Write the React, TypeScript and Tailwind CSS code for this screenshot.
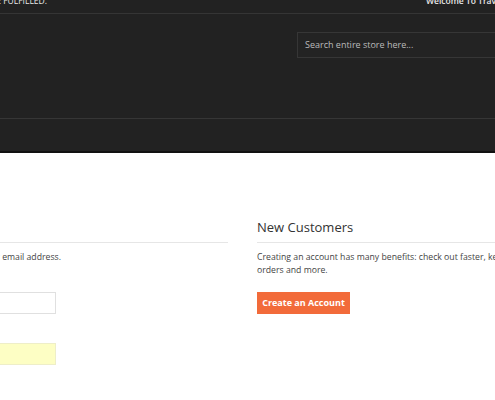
export default function App() {
  return (
    <div className="h-[400px] w-[495px] overflow-hidden bg-white font-['Open_Sans',sans-serif]">
      {/* Dark header */}
      <header className="border-b-2 border-[#111] bg-[#222]">
        <div className="flex h-[14px] items-start border-b border-[#353535]">
          <div className="flex w-[47px] shrink-0 justify-end">
            <span className="mt-[-4px] whitespace-nowrap text-[8.5px] uppercase leading-[10px] text-[#e8e8e8]">
              All orders will be fulfilled.
            </span>
          </div>
          <span className="ml-[379px] mt-[-4px] whitespace-nowrap text-[8.5px] font-semibold leading-[10px] text-[#e8e8e8]">
            Welcome To Traveller
          </span>
        </div>
        <div className="flex h-[104px] justify-end pt-[18px]">
          <div className="mr-[-40px] flex h-[26px] w-[238px] shrink-0 items-center border border-[#363636] bg-[#232323] pl-[7px] text-[9px] text-[#bbb]">
            Search entire store here...
          </div>
        </div>
        <div className="h-[33px] border-t border-[#363636]" />
      </header>

      {/* Login columns */}
      <main className="ml-[-158px] flex gap-[29px] pt-[66px]">
        <section className="w-[386px] shrink-0">
          <h2 className="border-b border-[#e6e6e6] pb-[6px] text-[13px] leading-[17px] text-[#333]">
            Registered Customers
          </h2>
          <div className="mt-[8px] flex w-[219px] justify-end">
            <p className="whitespace-nowrap text-[8.7px] leading-[13px] text-[#444]">
              If you have an account, sign in with your email address.
            </p>
          </div>
          <div className="mt-[28px] h-[22px] w-[214px] border border-[#e0e0e0] bg-white" />
          <div className="mt-[29px] h-[22px] w-[214px] border border-[#eeeec8] bg-[#fdfec4]" />
        </section>
        <section className="w-[426px] shrink-0">
          <h2 className="border-b border-[#e6e6e6] pb-[6px] text-[13px] leading-[17px] text-[#333]">
            New Customers
          </h2>
          <p className="mt-[8px] whitespace-nowrap text-[8.7px] leading-[13px] text-[#444]">
            Creating an account has many benefits: check out faster, keep more than one address, track
            <br />
            orders and more.
          </p>
          <button
            type="button"
            className="mt-[15px] h-[22px] w-[93px] bg-[#f26b3a] text-[9px] font-bold text-white"
          >
            Create an Account
          </button>
        </section>
      </main>
    </div>
  );
}
